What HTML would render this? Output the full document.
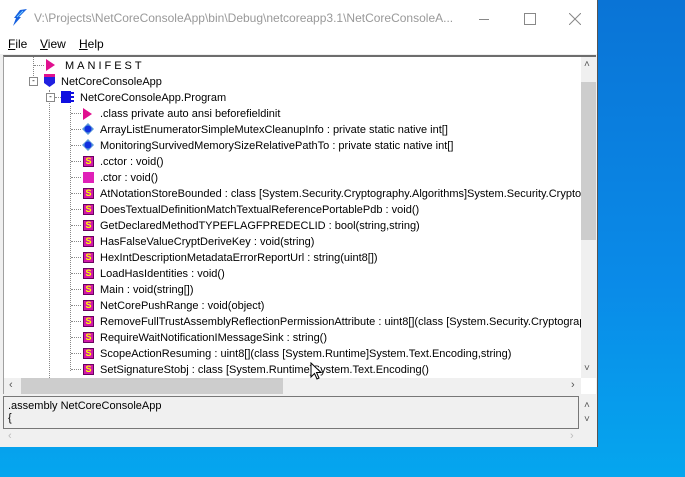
<!DOCTYPE html><html><head><style>
body{margin:0;width:685px;height:477px;overflow:hidden;background:linear-gradient(180deg,#0a74d6 0%,#0a8be8 60%,#05a6ee 100%);font-family:"Liberation Sans",sans-serif;position:relative}
.win{position:absolute;left:0;top:0;width:597px;height:447px;background:#f0f0f0;border-right:1px solid #555}
.title{position:absolute;left:0;top:0;width:597px;height:34px;background:#fff;font-size:12px;color:#999}
.menu{position:absolute;left:0;top:34px;width:597px;height:20px;background:#fff;font-size:12px;color:#000}
.menu span{position:absolute;top:3px}
.tree{position:absolute;left:3px;top:55px;width:593px;height:339px;background:#fff;border-top:2px solid #6d6d6d;border-left:1px solid #a0a0a0;box-sizing:border-box;overflow:hidden}
.row{position:absolute;font-size:11px;white-space:nowrap;color:#000;height:16px;line-height:16px}
.ic{position:absolute;width:11px;height:11px}
.s{background:#d01aa8;border:1px solid #6a0060;box-sizing:border-box;color:#ff0;font-size:9px;font-weight:bold;line-height:9px;text-align:center}
.dot{position:absolute;border-top:1px dotted #888;height:0}
.vdot{position:absolute;border-left:1px dotted #888;width:0}
</style></head><body>
<div class="win">
<div class="title">
<svg style="position:absolute;left:12px;top:9px" width="16" height="18"><path d="M15 0 L7 8 L9 8 L1 17 L4 9 L2 9 L8 1Z" fill="#1560e0"/><path d="M11 2 L5 8" stroke="#7cf" stroke-width="1"/></svg>
<span style="position:absolute;left:34px;top:11px">V:\Projects\NetCoreConsoleApp\bin\Debug\netcoreapp3.1\NetCoreConsoleA...</span>
<div style="position:absolute;left:479px;top:19px;width:10px;border-top:1px solid #888"></div>
<div style="position:absolute;left:524px;top:13px;width:10px;height:10px;border:1px solid #888"></div>
<svg style="position:absolute;left:569px;top:13px" width="12" height="12"><path d="M0 0L12 12M12 0L0 12" stroke="#888"/></svg>
</div>
<div class="menu"><span style="left:8px"><u>F</u>ile</span><span style="left:40px"><u>V</u>iew</span><span style="left:79px"><u>H</u>elp</span></div>
<div class="tree">
<div class="vdot" style="left:29px;top:0;height:25px"></div>
<div class="vdot" style="left:45px;top:33px;height:300px"></div>
<div class="vdot" style="left:66px;top:49px;height:265px"></div>
<div class="dot" style="left:30px;top:8px;width:10px"></div>
<svg style="position:absolute;left:42px;top:2px" width="9" height="12"><path d="M0 0L9 6L0 12Z" fill="#e0108f"/></svg>
<div class="row" style="left:61px;top:1px;letter-spacing:3px">MANIFEST</div>
<div style="position:absolute;left:25px;top:20px;width:7px;height:7px;border:1px solid #888;background:#fff;font-size:8px;line-height:6px;text-align:center">-</div>
<svg style="position:absolute;left:40px;top:17px" width="11" height="13"><rect x="0" y="0" width="11" height="3" fill="#e0108f"/><path d="M0 3H11V9L5.5 13L0 9Z" fill="#2020e0"/></svg>
<div class="row" style="left:57px;top:17px">NetCoreConsoleApp</div>
<div style="position:absolute;left:42px;top:36px;width:7px;height:7px;border:1px solid #888;background:#fff;font-size:8px;line-height:6px;text-align:center">-</div>
<div class="dot" style="left:51px;top:40px;width:6px"></div>
<svg style="position:absolute;left:57px;top:34px" width="14" height="12"><rect x="0" y="0" width="10" height="12" fill="#1010e0"/><rect x="10" y="1" width="3" height="2" fill="#1010e0"/><rect x="10" y="5" width="3" height="2" fill="#1010e0"/><rect x="10" y="9" width="3" height="2" fill="#1010e0"/></svg>
<div class="row" style="left:76px;top:33px">NetCoreConsoleApp.Program</div>
<div id="m"></div>
<div style="position:absolute;left:577px;top:0;width:16px;height:321px;background:#f0f0f0"></div>
<div style="position:absolute;left:577px;top:25px;width:16px;height:158px;background:#cdcdcd"></div>
<div style="position:absolute;left:580px;top:2px;font-size:10px;color:#555">&#x2C4;</div>
<div style="position:absolute;left:580px;top:306px;font-size:10px;color:#555">&#x2C5;</div>
<div style="position:absolute;left:0;top:321px;width:577px;height:16px;background:#f0f0f0"></div>
<div style="position:absolute;left:17px;top:321px;width:262px;height:16px;background:#cdcdcd"></div>
<div style="position:absolute;left:5px;top:322px;font-size:11px;color:#555">&#x2039;</div>
<div style="position:absolute;left:567px;top:322px;font-size:11px;color:#555">&#x203A;</div>
</div>
<div style="position:absolute;left:3px;top:396px;width:576px;height:33px;background:#f0f0f0;border:1px solid #777;box-sizing:border-box;font-size:11px;line-height:12px;padding:3px 0 0 4px">.assembly NetCoreConsoleApp<br>{</div>
<div style="position:absolute;left:584px;top:400px;font-size:10px;color:#555">&#x2C4;</div>
<div style="position:absolute;left:584px;top:414px;font-size:10px;color:#555">&#x2C5;</div>
<div style="position:absolute;left:8px;top:430px;font-size:11px;color:#bbb">&#x2039;</div>
<div style="position:absolute;left:570px;top:430px;font-size:11px;color:#bbb">&#x203A;</div>
</div>
<svg style="position:absolute;left:310px;top:362px" width="12" height="18"><path d="M1 1V15L4.5 11.5L7 17L9 16L6.5 10.5H11Z" fill="#fff" stroke="#000"/></svg>
<script>
var items=[["t",".class private auto ansi beforefieldinit"],["d","ArrayListEnumeratorSimpleMutexCleanupInfo : private static native int[]"],["d","MonitoringSurvivedMemorySizeRelativePathTo : private static native int[]"],["s",".cctor : void()"],["p",".ctor : void()"],["s","AtNotationStoreBounded : class [System.Security.Cryptography.Algorithms]System.Security.Cryptography"],["s","DoesTextualDefinitionMatchTextualReferencePortablePdb : void()"],["s","GetDeclaredMethodTYPEFLAGFPREDECLID : bool(string,string)"],["s","HasFalseValueCryptDeriveKey : void(string)"],["s","HexIntDescriptionMetadataErrorReportUrl : string(uint8[])"],["s","LoadHasIdentities : void()"],["s","Main : void(string[])"],["s","NetCorePushRange : void(object)"],["s","RemoveFullTrustAssemblyReflectionPermissionAttribute : uint8[](class [System.Security.Cryptography"],["s","RequireWaitNotificationIMessageSink : string()"],["s","ScopeActionResuming : uint8[](class [System.Runtime]System.Text.Encoding,string)"],["s","SetSignatureStobj : class [System.Runtime]System.Text.Encoding()"]];
var h="";items.forEach(function(it,i){var y=49+i*16;h+='<div class="dot" style="left:67px;top:'+(y+7)+'px;width:10px"></div>';
if(it[0]=="t")h+='<svg style="position:absolute;left:79px;top:'+(y+2)+'px" width="9" height="12"><path d="M0 0L9 6L0 12Z" fill="#e0108f"/></svg>';
else if(it[0]=="d")h+='<svg style="position:absolute;left:78px;top:'+(y+1)+'px" width="12" height="12"><path d="M6 0L12 6L6 12L0 6Z" fill="#5a9ad8"/><circle cx="6" cy="6" r="3.5" fill="#1030e0"/></svg>';
else if(it[0]=="p")h+='<div class="ic" style="left:79px;top:'+(y+2)+'px;background:#e020b8"></div>';
else h+='<div class="ic s" style="left:79px;top:'+(y+2)+'px">S</div>';
h+='<div class="row" style="left:96px;top:'+y+'px">'+it[1]+'</div>';});
document.getElementById("m").innerHTML=h;
</script>
</body></html>
